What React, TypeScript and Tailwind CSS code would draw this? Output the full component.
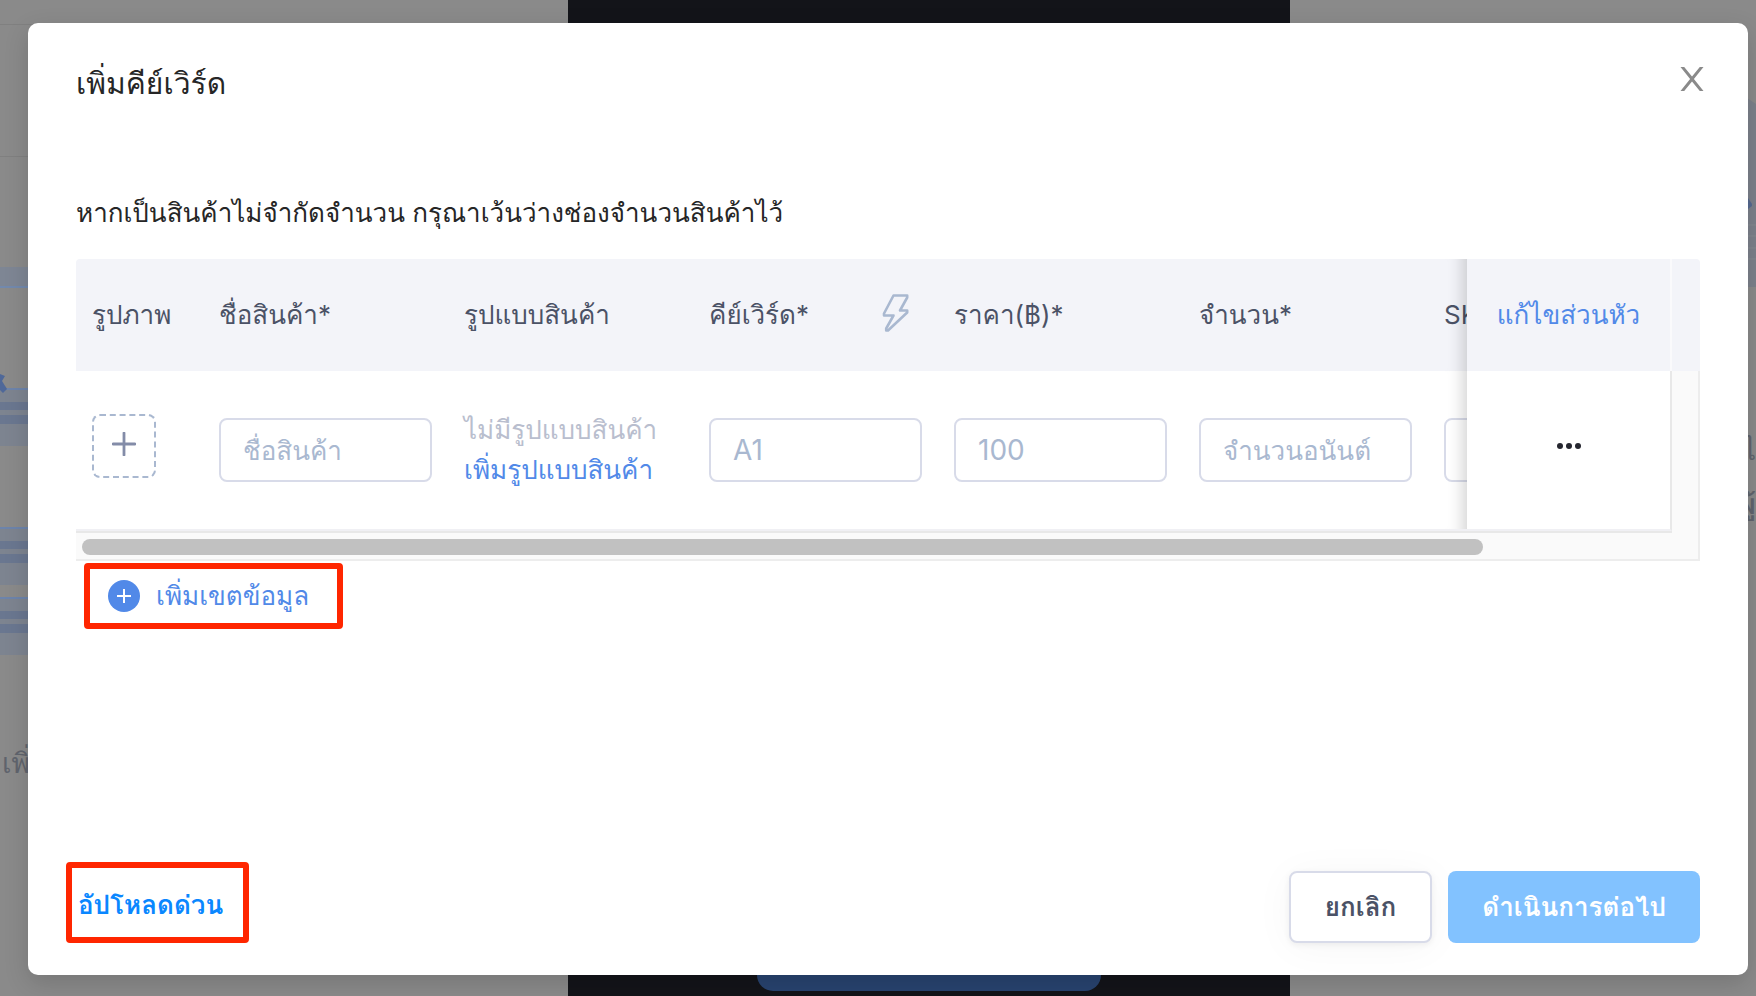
import type { ReactNode } from "react";
import { clsx } from "clsx";

const COLUMNS = [
  { key: "image", label: "รูปภาพ", width: "w-[127px]" },
  { key: "name", label: "ชื่อสินค้า*", width: "w-[245px]" },
  { key: "variant", label: "รูปแบบสินค้า", width: "w-[245px]" },
  { key: "keyword", label: "คีย์เวิร์ด*", width: "w-[245px]" },
  { key: "price", label: "ราคา(฿)*", width: "w-[245px]" },
  { key: "amount", label: "จำนวน*", width: "w-[245px]" },
  { key: "sku", label: "SKU", width: "w-[245px]" },
];

// Soft edge cast by the pinned column onto the cells that scroll under it
const PINNED =
  "sticky right-0 z-10 border-r-2 before:pointer-events-none before:absolute before:inset-y-0 before:right-full before:w-10 before:shadow-[inset_-20px_0_16px_-16px_rgba(0,0,0,0.18)]";

function BoltIcon() {
  return (
    <svg viewBox="0 0 28 40" className="h-10 w-7" fill="none" stroke="#a9b8d0" strokeWidth="2.6" strokeLinejoin="round" aria-hidden="true">
      <path d="M11.500 2.500H25.200V4.500L18 17.500H25.200V19.500L6 37.500H4.200V35.500L11.500 22.500H2V20.500Z" />
    </svg>
  );
}

function CloseIcon() {
  return (
    <svg viewBox="0 0 24 24" className="size-6" fill="#8a8a8a" aria-hidden="true">
      <path d="M.5 0H4.200L12 9.400 19.800 0H23.500L13.900 12 23.500 24H19.800L12 14.600 4.200 24H.5L10.100 12Z" />
    </svg>
  );
}

function PlusIcon() {
  return (
    <svg viewBox="0 0 24 24" className="size-6" stroke="#838ca8" strokeWidth="2.8" strokeLinecap="round" aria-hidden="true">
      <path d="M12 1V23M1 12H23" />
    </svg>
  );
}

function AddCircleIcon() {
  return (
    <svg viewBox="0 0 32 32" className="size-8" aria-hidden="true">
      <circle cx="16" cy="16" r="16" fill="#5189e8" />
      <path d="M16 9V23M9 16H23" stroke="#fff" strokeWidth="2" />
    </svg>
  );
}

function MoreIcon() {
  return (
    <svg viewBox="0 0 24 8" className="h-2 w-6" fill="#25262f" aria-hidden="true">
      <circle cx="3" cy="4" r="3" />
      <circle cx="12" cy="4" r="3" />
      <circle cx="21" cy="4" r="3" />
    </svg>
  );
}

/** The page behind the dialog, already dimmed. */
function Backdrop() {
  return (
    <div className="absolute inset-0 flex overflow-hidden bg-[#8a8a8a] text-[28px] text-[#60646d]" aria-hidden="true">
      <div className="relative basis-[568px]">
        <svg width="368" height="700" className="block">
          <path d="M0 24.500H368M0 156.500H368" stroke="#808080" strokeWidth="1" />
          <rect y="267" width="60" height="20" fill="#7e8694" />
          <rect y="286" width="60" height="2" fill="#7289ad" />
          {[388, 527, 597].map((y) => (
            <g key={y}>
              <rect y={y} width="60" height="58" fill="#7d8490" />
              <rect y={y} width="60" height="2" fill="#6d84ab" />
              <rect y={y + 14} width="60" height="8" fill="#6a7790" />
              <rect y={y + 27} width="60" height="9" fill="#6a7790" />
            </g>
          ))}
          <path d="M0 374L5 376L2 381L7 389L3 393L0 390Z" fill="#4f6899" />
        </svg>
        <p className="absolute top-[743px] left-0.5 leading-10">เพิ่ม</p>
      </div>
      <div className="flex basis-[722px] items-end justify-center bg-[#131419] pb-[5px]">
        <div className="h-16 w-[344px] rounded-2xl bg-[#28436f]" />
      </div>
      <div className="relative flex-1">
        <svg width="12" height="290" className="absolute top-0 right-0">
          <path d="M0 96L12 104V287H0Z" fill="#7c818b" />
          <path d="M4 198L8 204L8 206L4 209Z" fill="#566a91" />
          <path d="M0 225H12M0 236H12M0 248H12M0 259H12" stroke="#868a90" strokeWidth="1" />
        </svg>
        <p className="absolute top-[430px] right-0 leading-10">ไ</p>
        <p className="absolute top-[484px] right-0 leading-10 font-semibold">ผู้</p>
      </div>
    </div>
  );
}

function Field({ label, placeholder, className }: { label: string; placeholder?: string; className?: string }) {
  return (
    <input
      type="text"
      aria-label={label}
      placeholder={placeholder}
      className={clsx(
        "block h-16 w-full rounded-lg border-2 border-[#d8dbe9] bg-white px-[22px] text-[#4b5266] placeholder:text-[#a9b8d0]",
        className,
      )}
    />
  );
}

/** Red frame that points the reader at a control. */
function Highlight({ className, children }: { className?: string; children: ReactNode }) {
  return <div className={clsx("flex rounded-sm border-6 border-[#ff2600]", className)}>{children}</div>;
}

function ProductTable() {
  return (
    <div className="overflow-hidden rounded-t">
      <div className="flex">
        <div className="min-w-0 flex-1 overflow-hidden">
          <table className="w-[1802px] table-fixed border-separate border-spacing-0 text-left">
            <thead>
              <tr className="h-28 bg-[#f3f4f9] text-[#4b5266]">
                {COLUMNS.map((col) => (
                  <th key={col.key} className={clsx("px-4 font-normal", col.width)}>
                    <div className="flex items-center justify-between">
                      {col.label}
                      {col.key === "keyword" && (
                        <button type="button" aria-label="สร้างคีย์เวิร์ด" className="mr-3 pb-1">
                          <BoltIcon />
                        </button>
                      )}
                    </div>
                  </th>
                ))}
                <th className={clsx(PINNED, "w-[205px] border-[#fafafc] bg-[#f3f4f9] text-center font-normal")}>
                  <button type="button" className="text-[#5189e8]">
                    แก้ไขส่วนหัว
                  </button>
                </th>
              </tr>
            </thead>
            <tbody>
              <tr className="h-40 *:border-b-2 *:border-b-[#f0f0f4] *:px-4">
                <td>
                  <button
                    type="button"
                    aria-label="เพิ่มรูปภาพ"
                    className="mb-2 flex size-16 items-center justify-center rounded-lg border-2 border-dashed border-[#a9b8d0] pb-1"
                  >
                    <PlusIcon />
                  </button>
                </td>
                <td>
                  <Field label="ชื่อสินค้า" placeholder="ชื่อสินค้า" />
                </td>
                <td className="leading-10 whitespace-nowrap">
                  <p className="text-[#b9bece]">ไม่มีรูปแบบสินค้า</p>
                  <button type="button" className="block text-[#5189e8]">
                    เพิ่มรูปแบบสินค้า
                  </button>
                </td>
                <td>
                  <Field label="คีย์เวิร์ด" placeholder="A1" className="text-[28px]" />
                </td>
                <td>
                  <Field label="ราคา" placeholder="100" className="text-[28px]" />
                </td>
                <td>
                  <Field label="จำนวน" placeholder="จำนวนอนันต์" />
                </td>
                <td>
                  <Field label="SKU" />
                </td>
                <td className={clsx(PINNED, "border-r-[#e8e8e8] bg-white")}>
                  <button type="button" aria-label="ตัวเลือกเพิ่มเติม" className="mx-auto mb-2 flex h-8 items-center">
                    <MoreIcon />
                  </button>
                </td>
              </tr>
            </tbody>
          </table>
        </div>
        <div className="flex w-7 flex-col">
          <div className="h-28 bg-[#f3f4f9]" />
          <div className="flex-1 border-r-2 border-[#ededed] bg-[#fafafa]" />
        </div>
      </div>
      {/* Horizontal scroll track */}
      <div className="border-r-2 border-b-2 border-[#ededed] bg-[#fafafa]">
        <div className="mr-[26px] h-[2px] bg-[#e8e8e8]" />
        <div className="px-[6px] pt-[6px] pb-1">
          <div className="h-4 w-[87%] rounded-full bg-[#c1c1c1]" />
        </div>
      </div>
    </div>
  );
}

export default function App() {
  return (
    <div className="relative flex min-h-screen pt-[23px] pr-2 pb-[21px] pl-7 font-['Inter','Loma',sans-serif] text-[26px] leading-10">
      <Backdrop />
      <div
        role="dialog"
        aria-labelledby="dialog-title"
        className="relative flex min-w-0 flex-1 flex-col rounded-[10px] bg-white shadow-[0_8px_24px_rgba(0,0,0,0.15)]"
      >
        <div className="flex items-start justify-between px-12 pt-10">
          <h1 id="dialog-title" className="text-[30px] leading-10 text-[#262626]">
            เพิ่มคีย์เวิร์ด
          </h1>
          <button type="button" aria-label="ปิด" className="-mr-2 p-1">
            <CloseIcon />
          </button>
        </div>

        <div className="flex-1 px-12 pt-[90px]">
          <p className="mb-[26px] text-[#262626]">หากเป็นสินค้าไม่จำกัดจำนวน กรุณาเว้นว่างช่องจำนวนสินค้าไว้</p>
          <ProductTable />
          <Highlight className="mt-[2px] ml-2 w-fit">
            <button type="button" className="flex h-[54px] items-center gap-4 pr-7 pl-[18px] text-[#5189e8]">
              <AddCircleIcon />
              เพิ่มเขตข้อมูล
            </button>
          </Highlight>
        </div>

        <div className="flex items-end justify-between px-12 pb-8">
          <Highlight className="-ml-[10px]">
            <button type="button" className="h-[69px] pt-1 pr-5 pl-[6px] font-semibold text-[#0a87ff]">
              อัปโหลดด่วน
            </button>
          </Highlight>
          <div className="flex gap-4 font-semibold">
            <button
              type="button"
              className="h-[72px] rounded-lg border-2 border-[#d8dbe9] bg-white px-[34px] text-[#4b5266] shadow-[0_2px_6px_rgba(0,0,0,0.06),0_4px_40px_rgba(0,0,0,0.04)]"
            >
              ยกเลิก
            </button>
            <button type="button" disabled className="h-[72px] rounded-lg bg-[#82c2ff] px-[34px] text-white">
              ดำเนินการต่อไป
            </button>
          </div>
        </div>
      </div>
    </div>
  );
}
